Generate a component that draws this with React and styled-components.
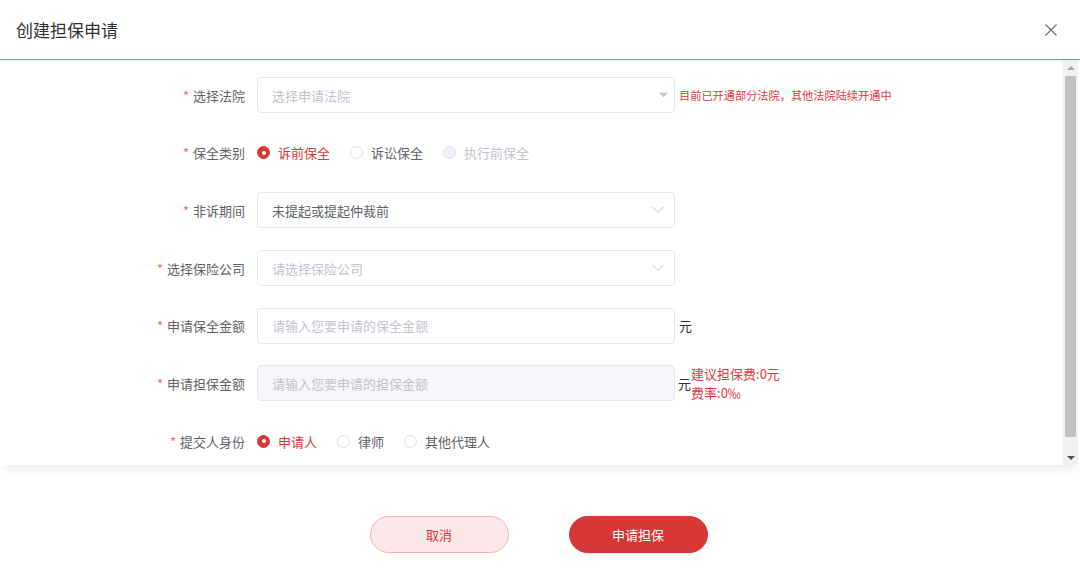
import styled, { createGlobalStyle } from 'styled-components';

const GlobalStyle = createGlobalStyle`
  html, body {
    margin: 0;
    padding: 0;
    background: #fff;
    font-family: "Noto Sans CJK SC", "Noto Sans", "Liberation Sans", sans-serif;
  }
`;

const RED = '#d93636';

const Page = styled.div`
  width: 1080px;
  height: 577px;
  display: flex;
  flex-direction: column;
  background: #fff;
  overflow: hidden;
`;

const Header = styled.div`
  height: 59px;
  flex-shrink: 0;
  display: flex;
  align-items: center;
  justify-content: space-between;
  padding: 0 22px 0 16px;
  border-bottom: 1px solid #e07474;

  h2 {
    margin: 0;
    font-size: 17px;
    font-weight: 400;
    color: #303133;
  }
`;

const Close = styled.div`
  width: 14px;
  height: 14px;
  display: flex;
  cursor: pointer;
`;

const Body = styled.div`
  height: 405px;
  flex-shrink: 0;
  display: flex;
  position: relative;
  z-index: 1;
  box-shadow: 0 8px 10px -4px rgba(0, 0, 0, 0.08);
  padding-right: 2px;
  overflow: hidden;
`;

const ScrollBar = styled.div`
  width: 15px;
  flex-shrink: 0;
  background: #f1f1f1;
  display: flex;
  flex-direction: column;
`;

const ScrollButton = styled.div`
  height: 15px;
  flex-shrink: 0;
  display: flex;
  align-items: center;
  justify-content: center;
`;

const ScrollTrack = styled.div`
  flex: 1;
  padding: 1px 2px 13px;
  display: flex;
`;

const Thumb = styled.div`
  flex: 1;
  background: #c1c1c1;
`;

const Form = styled.div`
  flex: 1;
  display: flex;
  flex-direction: column;
  gap: 21.7px;
  padding: 17px 0 22px;
`;

const Row = styled.div`
  display: flex;
  align-items: center;
  min-height: 36px;
`;

const Label = styled.label`
  width: 257px;
  flex-shrink: 0;
  box-sizing: border-box;
  padding-right: 12px;
  text-align: right;
  font-size: 13px;
  color: #606266;

  &::before {
    content: '*';
    color: #f56c6c;
    margin-right: 4px;
  }
`;

const Field = styled.div`
  position: relative;
  width: 418px;
  height: 36px;
  box-sizing: border-box;
  border: 1px solid #e4e7ed;
  border-radius: 4px;
  background: ${(p) => (p.disabled ? '#f5f7fa' : '#fff')};
  display: flex;
  align-items: center;
  padding: 0 14px;
  font-size: 13px;
  color: ${(p) => (p.placeholder ? '#c0c4cc' : '#606266')};
`;

const Arrow = styled.span`
  position: absolute;
  right: ${(p) => (p.caret ? '6px' : '10px')};
  top: 50%;
  transform: translateY(-50%);
  display: flex;
`;

const Hint = styled.span`
  margin-left: 4px;
  font-size: 11.2px;
  color: #e03a3e;
`;

const Unit = styled.span`
  margin-left: ${(p) => (p.tight ? '3px' : '4px')};
  font-size: 13px;
  color: #303133;
`;

const FeeTip = styled.div`
  font-size: 13px;
  line-height: 19px;
  color: #e03a3e;
`;

const RadioGroup = styled.div`
  display: flex;
  align-items: center;
`;

const Radio = styled.label`
  display: flex;
  align-items: center;
  margin-right: 20px;
  font-size: 13px;
  color: ${(p) => (p.checked ? RED : p.disabled ? '#c0c4cc' : '#606266')};
  cursor: ${(p) => (p.disabled ? 'not-allowed' : 'pointer')};
`;

const Dot = styled.span`
  width: 13px;
  height: 13px;
  box-sizing: border-box;
  border-radius: 50%;
  margin-right: 8px;
  border: 1px solid ${(p) => (p.checked ? RED : '#dcdfe6')};
  background: ${(p) => (p.checked ? RED : p.disabled ? '#edf2fc' : '#fff')};
  display: flex;
  align-items: center;
  justify-content: center;

  &::after {
    content: '';
    width: 4px;
    height: 4px;
    border-radius: 50%;
    background: #fff;
    display: ${(p) => (p.checked ? 'block' : 'none')};
  }
`;

const Footer = styled.div`
  flex: 1;
  display: flex;
  justify-content: center;
  gap: 60px;
  padding-top: 51px;
  padding-right: 3px;
`;

const Button = styled.button`
  width: 139px;
  height: 37px;
  border-radius: 19px;
  font-family: inherit;
  font-size: 13px;
  cursor: pointer;
  border: 1px solid ${(p) => (p.primary ? RED : '#f3b4b4')};
  background: ${(p) => (p.primary ? RED : '#fbe9e9')};
  color: ${(p) => (p.primary ? '#fff' : '#d8343c')};
`;

const Caret = () => (
  <svg width="9" height="5" viewBox="0 0 9 5">
    <path d="M0 0 H9 L4.5 5 Z" fill="#c0c4cc" />
  </svg>
);

const Chevron = () => (
  <svg width="12" height="7" viewBox="0 0 12 7">
    <path d="M0.5 0.5 L6 6 L11.5 0.5" fill="none" stroke="#c0c4cc" strokeWidth="1" />
  </svg>
);

const Triangle = ({ up, color }) => (
  <svg width="8" height="4" viewBox="0 0 8 4">
    <path d={up ? 'M0 4 H8 L4 0 Z' : 'M0 0 H8 L4 4 Z'} fill={color} />
  </svg>
);

function RadioRow({ label, options, value }) {
  return (
    <Row>
      <Label>{label}</Label>
      <RadioGroup>
        {options.map((o) => (
          <Radio key={o.text} checked={o.text === value} disabled={o.disabled}>
            <Dot checked={o.text === value} disabled={o.disabled} />
            {o.text}
          </Radio>
        ))}
      </RadioGroup>
    </Row>
  );
}

export default function App() {
  return (
    <Page>
      <GlobalStyle />
      <Header>
        <h2>创建担保申请</h2>
        <Close>
          <svg width="14" height="14" viewBox="0 0 14 14">
            <path d="M1.5 1.5 L12.5 12.5 M12.5 1.5 L1.5 12.5" stroke="#6b6f78" strokeWidth="1.2" />
          </svg>
        </Close>
      </Header>

      <Body>
        <Form>
          <Row>
            <Label>选择法院</Label>
            <Field placeholder>
              选择申请法院
              <Arrow caret><Caret /></Arrow>
            </Field>
            <Hint>目前已开通部分法院，其他法院陆续开通中</Hint>
          </Row>

          <RadioRow
            label="保全类别"
            value="诉前保全"
            options={[
              { text: '诉前保全' },
              { text: '诉讼保全' },
              { text: '执行前保全', disabled: true },
            ]}
          />

          <Row>
            <Label>非诉期间</Label>
            <Field>
              未提起或提起仲裁前
              <Arrow><Chevron /></Arrow>
            </Field>
          </Row>

          <Row>
            <Label>选择保险公司</Label>
            <Field placeholder>
              请选择保险公司
              <Arrow><Chevron /></Arrow>
            </Field>
          </Row>

          <Row>
            <Label>申请保全金额</Label>
            <Field placeholder>请输入您要申请的保全金额</Field>
            <Unit>元</Unit>
          </Row>

          <Row>
            <Label>申请担保金额</Label>
            <Field placeholder disabled>请输入您要申请的担保金额</Field>
            <Unit tight>元</Unit>
            <FeeTip>
              <div>建议担保费:0元</div>
              <div>费率:0‰</div>
            </FeeTip>
          </Row>

          <RadioRow
            label="提交人身份"
            value="申请人"
            options={[{ text: '申请人' }, { text: '律师' }, { text: '其他代理人' }]}
          />
        </Form>

        <ScrollBar>
          <ScrollButton><Triangle up color="#a3a3a3" /></ScrollButton>
          <ScrollTrack><Thumb /></ScrollTrack>
          <ScrollButton><Triangle color="#505050" /></ScrollButton>
        </ScrollBar>
      </Body>

      <Footer>
        <Button>取消</Button>
        <Button primary>申请担保</Button>
      </Footer>
    </Page>
  );
}
